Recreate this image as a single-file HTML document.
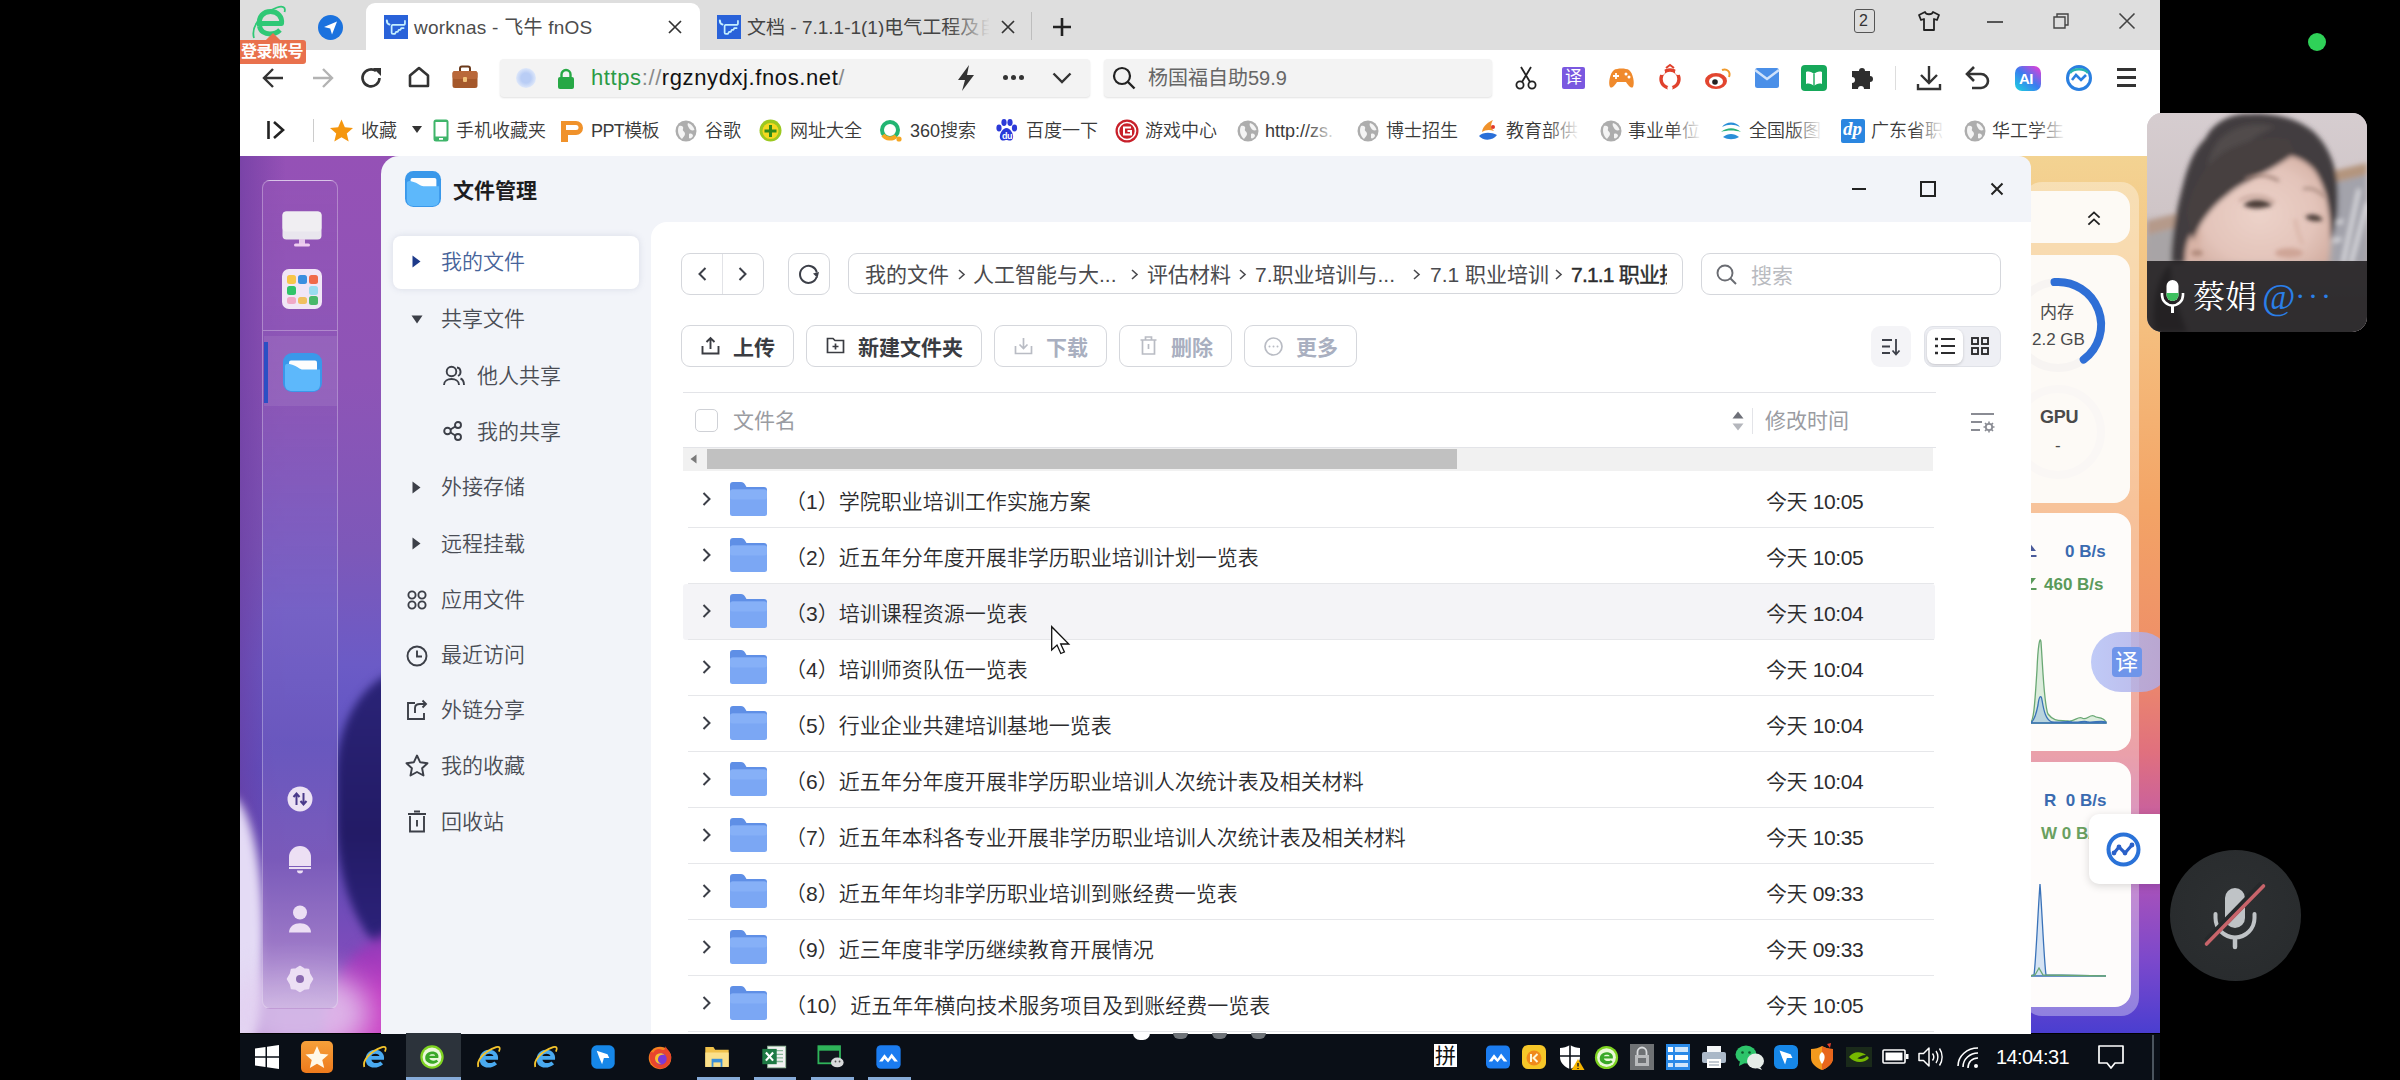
<!DOCTYPE html>
<html lang="zh-CN">
<head>
<meta charset="utf-8">
<title>worknas - 飞牛 fnOS</title>
<style>
*{box-sizing:border-box;margin:0;padding:0}
html,body{width:2400px;height:1080px;overflow:hidden;background:#000}
body{position:relative;font-family:"Liberation Sans","Noto Sans CJK SC",sans-serif;color:#333}
.a{position:absolute}
.t{position:absolute;white-space:nowrap;line-height:1}
svg{position:absolute;overflow:visible}
#tabbar{left:240px;top:0;width:1920px;height:50px;background:#dedede}
#addr{left:240px;top:50px;width:1920px;height:55px;background:#fff}
#bm{left:240px;top:105px;width:1920px;height:51px;background:#fff}
.bmt{font-size:18px;color:#3a3a3a;top:122px;font-weight:350}
#page{left:240px;top:156px;width:1920px;height:877px;overflow:hidden;background:#8a55b8}
#task{left:240px;top:1033.500px;width:1920px;height:47px;background:#0a0f17}
#win{left:381px;top:156px;width:1650px;height:880px;background:#f2f4f9;border-radius:18px 12px 0 0}
#main{left:651px;top:222px;width:1380px;height:815px;background:#fff;border-radius:16px 0 0 0}
.nav{font-size:21px;color:#4a4d55;font-weight:350}
.btn{border:1px solid #d5d7dc;border-radius:9px;background:#fff}
.bt{font-size:21px;font-weight:700;color:#3a3c42}
.row{left:683px;width:1250px;height:56px}
.rowl{left:688px;width:1246px;height:1px;background:#e6e7ea}
.fn{font-size:21px;color:#2c2c2e;left:785px;font-weight:350}
.dt{font-size:21px;color:#2c2c2e;left:1766px;letter-spacing:-0.4px;font-weight:350}
</style>
</head>
<body>
<!-- ======= BROWSER CHROME ======= -->
<div class="a" id="tabbar"></div>
<div class="a" id="addr"></div>
<div class="a" id="bm"></div>
<!-- browser logo -->
<svg style="left:250px;top:4px" width="38" height="36" viewBox="0 0 38 36">
  <path d="M9.500 22 C10.500 27.500 15 30 20 30 C24 30 27.500 28.500 30 26" fill="none" stroke="#2fc876" stroke-width="5"/>
  <path d="M9.500 22 C8 12 14 7.500 20.500 7.500 C28 7.500 32.500 13 31.500 19.500 H9.500" fill="none" stroke="#2fc876" stroke-width="5" stroke-linejoin="round"/>
  <path d="M4 34 C1 24 9 10 27 3.500 C33 1.500 36 3.500 34.500 8" fill="none" stroke="#2fc876" stroke-width="1.800"/>
</svg>
<div class="a" style="left:240px;top:40px;width:66px;height:24px;background:#e9714d;border-radius:0 3px 3px 0"></div>
<div class="a" style="left:268px;top:35px;width:10px;height:10px;background:#e9714d;transform:rotate(45deg)"></div>
<div class="t" style="left:241px;top:44px;font-size:16px;font-weight:700;color:#fff;letter-spacing:-0.5px">登录账号</div>
<!-- telegram-like -->
<div class="a" style="left:318px;top:15px;width:25px;height:25px;border-radius:50%;background:#1b72de"></div>
<svg style="left:318px;top:15px" width="25" height="25" viewBox="0 0 25 25"><path d="M6 12 L19 6.5 L14 19.5 L12.2 13.6 Z" fill="#fff"/></svg>
<!-- active tab -->
<div class="a" style="left:366px;top:3px;width:334px;height:47px;background:#fff;border-radius:9px 9px 0 0"></div>
<div class="a" style="left:384px;top:15px;width:24px;height:24px;background:#2962d9"></div>
<svg style="left:384px;top:15px" width="24" height="24" viewBox="0 0 23.600 23.600"><path d="M2.800 5.500 C2.800 7.600 3.800 9 5.400 9.400" fill="none" stroke="#c4efff" stroke-width="2" stroke-linecap="round"/><path d="M20.600 5.800 V8 C20.600 9.100 19.800 9.800 18.800 9.800 H8.600 C7.900 9.800 7.500 10.200 7.500 11 V17.400 C7.500 18.200 8 18.600 8.700 18.600 H10.800 L11.800 16.600 H13.500 L14.500 14.600 H16.100 L17.100 12.800 H19.300" fill="none" stroke="#c4efff" stroke-width="1.700" stroke-linecap="round" stroke-linejoin="round"/></svg>
<div class="t" style="left:414px;top:18px;font-size:19px;color:#4c4c4c;letter-spacing:0.250px">worknas - 飞牛 fnOS</div>
<svg style="left:668px;top:20px" width="14" height="14" viewBox="0 0 14 14"><path d="M1 1 L13 13 M13 1 L1 13" stroke="#333" stroke-width="1.7"/></svg>
<!-- tab 2 -->
<div class="a" style="left:717px;top:15px;width:24px;height:24px;background:#2962d9"></div>
<svg style="left:717px;top:15px" width="24" height="24" viewBox="0 0 23.600 23.600"><path d="M2.800 5.500 C2.800 7.600 3.800 9 5.400 9.400" fill="none" stroke="#c4efff" stroke-width="2" stroke-linecap="round"/><path d="M20.600 5.800 V8 C20.600 9.100 19.800 9.800 18.800 9.800 H8.600 C7.900 9.800 7.500 10.200 7.500 11 V17.400 C7.500 18.200 8 18.600 8.700 18.600 H10.800 L11.800 16.600 H13.500 L14.500 14.600 H16.100 L17.100 12.800 H19.300" fill="none" stroke="#c4efff" stroke-width="1.700" stroke-linecap="round" stroke-linejoin="round"/></svg>
<div class="t" style="left:747px;top:18px;width:242px;overflow:hidden;font-size:19px;color:#444;letter-spacing:0">文档 - 7.1.1-1(1)电气工程及自动化</div>
<div class="a" style="left:950px;top:10px;width:40px;height:36px;background:linear-gradient(90deg,rgba(222,222,222,0),#dedede)"></div>
<svg style="left:1001px;top:20px" width="14" height="14" viewBox="0 0 14 14"><path d="M1 1 L13 13 M13 1 L1 13" stroke="#333" stroke-width="1.7"/></svg>
<div class="a" style="left:1031px;top:12px;width:1px;height:28px;background:#bdbdbd"></div>
<svg style="left:1052px;top:17px" width="20" height="20" viewBox="0 0 20 20"><path d="M10 1 V19 M1 10 H19" stroke="#222" stroke-width="2.6"/></svg>
<!-- window controls -->
<div class="a" style="left:1854px;top:9px;width:21px;height:24px;border:1.5px solid #555;border-radius:3px"></div>
<div class="t" style="left:1859px;top:13px;font-size:16px;color:#333">2</div>
<svg style="left:1918px;top:11px" width="22" height="20" viewBox="0 0 22 20"><path d="M7 1 L1 4 L3 9 L6 8 L6 19 L16 19 L16 8 L19 9 L21 4 L15 1 C14 4 8 4 7 1 Z" fill="none" stroke="#222" stroke-width="1.8" stroke-linejoin="round"/></svg>
<div class="a" style="left:1987px;top:21px;width:16px;height:2px;background:#555"></div>
<svg style="left:2053px;top:13px" width="16" height="16" viewBox="0 0 16 16"><path d="M1 4 H12 V15 H1 Z M4 4 V1 H15 V12 H12" fill="none" stroke="#444" stroke-width="1.4"/></svg>
<svg style="left:2119px;top:13px" width="16" height="16" viewBox="0 0 16 16"><path d="M0.5 0.5 L15.5 15.5 M15.5 0.5 L0.5 15.5" stroke="#444" stroke-width="1.6"/></svg>

<!-- address row -->
<svg style="left:262px;top:67px" width="22" height="22" viewBox="0 0 22 22"><path d="M21 11 H2 M11 2 L2 11 L11 20" fill="none" stroke="#333" stroke-width="2.4"/></svg>
<svg style="left:312px;top:67px" width="22" height="22" viewBox="0 0 22 22"><path d="M1 11 H20 M11 2 L20 11 L11 20" fill="none" stroke="#b3b3b3" stroke-width="2.4"/></svg>
<svg style="left:360px;top:67px" width="22" height="22" viewBox="0 0 22 22"><path d="M19.5 11 A8.5 8.5 0 1 1 16 4" fill="none" stroke="#333" stroke-width="2.6"/><path d="M13 1 H21 V9 Z" fill="#333"/></svg>
<svg style="left:407px;top:66px" width="24" height="22" viewBox="0 0 24 22"><path d="M3 9.5 L12 2 L21 9.5 V20 H3 Z" fill="none" stroke="#333" stroke-width="2.6" stroke-linejoin="round"/></svg>
<!-- briefcase -->
<svg style="left:452px;top:65px" width="26" height="24" viewBox="0 0 26 24"><rect x="8" y="1.5" width="10" height="6" rx="2" fill="none" stroke="#6b3a1c" stroke-width="2"/><rect x="0.5" y="6" width="25" height="17" rx="2.5" fill="#a5582b"/><rect x="0.5" y="6" width="25" height="8" rx="2.5" fill="#b9683a"/><rect x="11" y="12" width="4" height="5" rx="1" fill="#f2c27a"/></svg>
<!-- url box -->
<div class="a" style="left:500px;top:59px;width:590px;height:38px;background:#f3f3f3;border-radius:4px;box-shadow:0 1px 2px rgba(0,0,0,.12)"></div>
<div class="a" style="left:516px;top:68px;width:20px;height:20px;border-radius:50%;background:radial-gradient(circle,#b9cdf5 35%,#e3ebfa 75%)"></div>
<svg style="left:557px;top:68px" width="18" height="22" viewBox="0 0 18 22"><path d="M4.5 10 V6.5 A4.5 4.5 0 0 1 13.500 6.5 V10" fill="none" stroke="#27a845" stroke-width="2.4"/><rect x="1" y="9" width="16" height="12" rx="2" fill="#27a845"/></svg>
<div class="t" style="left:591px;top:67px;font-size:22px;color:#111;letter-spacing:0.600px"><span style="color:#2a9b45">https</span><span style="color:#8a8a8a">://</span>rgznydxj.fnos.net<span style="color:#8a8a8a">/</span></div>
<svg style="left:956px;top:64px" width="20" height="28" viewBox="0 0 20 28"><path d="M13 1 L2 16 H9 L6 27 L18 11 H11 Z" fill="#333"/></svg>
<div class="a" style="left:1003px;top:75px;width:5px;height:5px;border-radius:50%;background:#333;box-shadow:8px 0 0 #333,16px 0 0 #333"></div>
<svg style="left:1052px;top:72px" width="20" height="12" viewBox="0 0 20 12"><path d="M1.500 1.500 L10 10 L18.500 1.500" fill="none" stroke="#333" stroke-width="2.4"/></svg>
<!-- search box -->
<div class="a" style="left:1104px;top:59px;width:388px;height:38px;background:#f3f3f3;border-radius:4px;box-shadow:0 1px 2px rgba(0,0,0,.12)"></div>
<svg style="left:1112px;top:66px" width="24" height="24" viewBox="0 0 24 24"><circle cx="10" cy="10" r="8" fill="none" stroke="#222" stroke-width="2.2"/><path d="M16 16 L22.500 22.500" stroke="#222" stroke-width="2.4"/></svg>
<div class="t" style="left:1148px;top:68px;font-size:20px;color:#666">杨国福自助59.9</div>
<!-- toolbar icons -->
<svg style="left:1515px;top:66px" width="22" height="24" viewBox="0 0 22 24"><path d="M6 1 L15 16 M16 1 L7 16" stroke="#222" stroke-width="1.8"/><circle cx="5" cy="19" r="3.6" fill="none" stroke="#222" stroke-width="1.8"/><circle cx="17" cy="19" r="3.6" fill="none" stroke="#222" stroke-width="1.8"/></svg>
<div class="a" style="left:1562px;top:67px;width:23px;height:22px;background:#7a58e0;border-radius:2px"></div>
<div class="t" style="left:1565px;top:69px;font-size:17px;color:#fff">译</div>
<svg style="left:1608px;top:67px" width="27" height="22" viewBox="0 0 27 22"><path d="M6 3 C9 1 18 1 21 3 C25 6 27 16 25 20 C23 22 20 18 18 15 H9 C7 18 4 22 2 20 C0 16 2 6 6 3 Z" fill="#f08a2c"/><path d="M8 6 V12 M5 9 H11" stroke="#fff" stroke-width="1.8"/><circle cx="18" cy="7" r="1.5" fill="#fff"/><circle cx="21" cy="10" r="1.5" fill="#fff"/></svg>
<svg style="left:1657px;top:65px" width="26" height="26" viewBox="0 0 26 26"><circle cx="13" cy="14" r="9" fill="none" stroke="#e0412c" stroke-width="3.4"/><circle cx="5" cy="7" r="3" fill="#fff"/><circle cx="21" cy="7" r="3" fill="#fff"/><circle cx="13" cy="23" r="2.6" fill="#fff"/><path d="M9 3 L13 0 L17 3" fill="none" stroke="#e0412c" stroke-width="2"/></svg>
<svg style="left:1704px;top:66px" width="28" height="24" viewBox="0 0 28 24"><ellipse cx="12" cy="15" rx="11" ry="8" fill="#e2452f"/><ellipse cx="12" cy="15.500" rx="7" ry="5" fill="#fff"/><circle cx="11" cy="16" r="2.8" fill="#222"/><path d="M18 4 C23 2 27 6 25 11" fill="none" stroke="#f09a2c" stroke-width="2"/></svg>
<svg style="left:1755px;top:68px" width="24" height="20" viewBox="0 0 24 20"><rect x="0" y="0" width="24" height="20" rx="2.500" fill="#4a8fe8"/><path d="M0 2 L12 11 L24 2" fill="none" stroke="#cfe2fb" stroke-width="2.4"/></svg>
<svg style="left:1801px;top:65px" width="26" height="26" viewBox="0 0 26 26"><rect x="0" y="0" width="26" height="26" rx="4" fill="#16a85a"/><path d="M5 7 C8 6 11 7 13 9 C15 7 18 6 21 7 V19 C18 18 15 19 13 21 C11 19 8 18 5 19 Z" fill="#fff"/><path d="M13 9 V21" stroke="#16a85a" stroke-width="1.4"/></svg>
<svg style="left:1850px;top:66px" width="26" height="25" viewBox="0 0 26 25"><path d="M9 5 A3 3 0 1 1 15 5 H20 V10 A3 3 0 1 1 20 16 V23 H14 A3 3 0 1 0 8 23 H2 V17 A3 3 0 1 0 2 11 V5 Z" fill="#2e2e2e"/></svg>
<div class="a" style="left:1895px;top:66px;width:1px;height:24px;background:#ddd"></div>
<svg style="left:1916px;top:65px" width="26" height="26" viewBox="0 0 26 26"><path d="M13 1 V17 M5 10 L13 18 L21 10 M2 19 V24 H24 V19" fill="none" stroke="#333" stroke-width="2.4"/></svg>
<svg style="left:1965px;top:66px" width="26" height="24" viewBox="0 0 26 24"><path d="M2 8 H16 A7 7 0 0 1 16 22 H7" fill="none" stroke="#333" stroke-width="2.6"/><path d="M9 1 L2 8 L9 15" fill="none" stroke="#333" stroke-width="2.6"/></svg>
<div class="a" style="left:2015px;top:66px;width:26px;height:25px;border-radius:7px;background:linear-gradient(40deg,#1fcbe0 5%,#3a7cf0 50%,#e23fd8 95%)"></div>
<div class="t" style="left:2019px;top:71px;font-size:15px;font-weight:700;color:#fff;letter-spacing:-0.5px">AI</div>
<div class="a" style="left:2066px;top:65px;width:26px;height:26px;border-radius:50%;border:3px solid #2a7fe0;background:#fff"></div>
<svg style="left:2066px;top:65px" width="26" height="26" viewBox="0 0 26 26"><path d="M6 15 L10 10 L15 15 L20 10" fill="none" stroke="#2a7fe0" stroke-width="2.6"/><path d="M4 8 C8 3 18 3 22 8" fill="none" stroke="#29b5b0" stroke-width="2.4"/></svg>
<div class="a" style="left:2117px;top:68px;width:19px;height:3px;background:#333;box-shadow:0 8px 0 #333,0 16px 0 #333"></div>

<!-- bookmarks bar -->
<svg style="left:267px;top:120px" width="19" height="20" viewBox="0 0 19 20"><path d="M1.500 1 V19 M7 2 L16 10 L7 18" fill="none" stroke="#222" stroke-width="2.6"/></svg>
<div class="a" style="left:313px;top:119px;width:1px;height:23px;background:#ccc"></div>
<svg style="left:329px;top:119px" width="25" height="23" viewBox="0 0 25 24"><path d="M12.500 0.500 L16 8.500 L24.500 9.300 L18 15 L20 23.500 L12.500 19 L5 23.500 L7 15 L0.500 9.300 L9 8.500 Z" fill="#f5970f"/></svg>
<div class="t bmt" style="left:361px">收藏</div>
<svg style="left:412px;top:126px" width="10" height="7" viewBox="0 0 10 7"><path d="M0 0 H10 L5 7 Z" fill="#333"/></svg>
<svg style="left:433px;top:119px" width="16" height="23" viewBox="0 0 16 23"><rect x="0.500" y="0.500" width="15" height="22" rx="2.500" fill="#3fb56a"/><rect x="2.500" y="3" width="11" height="14.500" fill="#fff"/><rect x="6" y="19" width="4" height="1.800" fill="#fff"/></svg>
<div class="t bmt" style="left:456px">手机收藏夹</div>
<svg style="left:560px;top:119px" width="24" height="24" viewBox="0 0 24 24"><path d="M1 2 H16 A7 7 0 0 1 16 16 H8 V23 H1 Z" fill="#f0922b"/><path d="M6 6 H16 A2.500 2.500 0 0 1 16 11 H6 Z" fill="#fff"/></svg>
<div class="t bmt" style="left:591px;letter-spacing:-0.600px">PPT模板</div>
<div class="t bmt" style="left:705px">谷歌</div>
<svg style="left:759px;top:119px" width="23" height="23" viewBox="0 0 23 23"><circle cx="11.500" cy="11.500" r="11" fill="#9cc820"/><circle cx="11.500" cy="12" r="8" fill="#f5d820"/><path d="M11.500 6 V18 M5.500 12 H17.500" stroke="#2f8a1a" stroke-width="3"/></svg>
<div class="t bmt" style="left:790px">网址大全</div>
<svg style="left:879px;top:119px" width="24" height="24" viewBox="0 0 24 24"><circle cx="11" cy="11" r="8" fill="none" stroke="#22b573" stroke-width="4"/><path d="M4 16 A8.500 8.500 0 0 0 17 17" fill="none" stroke="#f5a623" stroke-width="4"/><circle cx="20" cy="20" r="2.600" fill="#f5a623"/></svg>
<div class="t bmt" style="left:910px">360搜索</div>
<svg style="left:995px;top:118px" width="23" height="24" viewBox="0 0 23 24"><ellipse cx="4" cy="10" rx="2.600" ry="3.400" fill="#2b39d8"/><ellipse cx="9" cy="4.500" rx="2.600" ry="3.400" fill="#2b39d8"/><ellipse cx="15" cy="4.500" rx="2.600" ry="3.400" fill="#2b39d8"/><ellipse cx="19.500" cy="10" rx="2.600" ry="3.400" fill="#2b39d8"/><path d="M11.500 10 C15 10 19 16 18 20 C17 24 13 22 11.500 22 C10 22 6 24 5 20 C4 16 8 10 11.500 10 Z" fill="#2b39d8"/></svg>
<div class="t" style="left:1002px;top:132px;font-size:9px;font-weight:700;color:#fff;letter-spacing:-0.500px">du</div>
<div class="t bmt" style="left:1026px">百度一下</div>
<svg style="left:1115px;top:119px" width="24" height="24" viewBox="0 0 24 24"><circle cx="12" cy="12" r="11.500" fill="#c8202a"/><circle cx="12" cy="12" r="8.500" fill="none" stroke="#fff" stroke-width="1.600"/><path d="M16 8.500 H9 V15.500 H16 V12 H12.500" fill="none" stroke="#fff" stroke-width="2"/></svg>
<div class="t bmt" style="left:1145px">游戏中心</div>
<div class="t bmt" style="left:1265px;width:71px;overflow:hidden">http://zs.</div>
<div class="a" style="left:1306px;top:112px;width:32px;height:36px;background:linear-gradient(90deg,rgba(255,255,255,0),#fff)"></div>
<div class="t bmt" style="left:1386px">博士招生</div>
<svg style="left:1477px;top:119px" width="22" height="23" viewBox="0 0 22 23"><path d="M2 17 C6 13 14 13 20 16 C16 22 6 22 2 17 Z" fill="#2a6fd8"/><path d="M5 13 C6 6 12 3 16 1 C13 6 14 9 17 12 C12 10 8 11 5 13 Z" fill="#f0922b"/><circle cx="16" cy="8" r="2" fill="#e23a2a"/></svg>
<div class="t bmt" style="left:1506px">教育部供</div>
<div class="a" style="left:1548px;top:112px;width:32px;height:36px;background:linear-gradient(90deg,rgba(255,255,255,0),#fff)"></div>
<div class="t bmt" style="left:1628px">事业单位</div>
<div class="a" style="left:1670px;top:112px;width:32px;height:36px;background:linear-gradient(90deg,rgba(255,255,255,0),#fff)"></div>
<svg style="left:1720px;top:119px" width="22" height="23" viewBox="0 0 22 23"><path d="M2 8 C6 2 16 2 20 8 C14 5 8 5 2 8 Z" fill="#2a8fd8"/><path d="M1 13 C7 8 15 8 21 13 C15 11 7 11 1 13 Z" fill="#2ab07a"/><path d="M3 18 C8 14 14 14 19 18 C14 21 8 21 3 18 Z" fill="#2a8fd8"/></svg>
<div class="t bmt" style="left:1749px">全国版图</div>
<div class="a" style="left:1791px;top:112px;width:32px;height:36px;background:linear-gradient(90deg,rgba(255,255,255,0),#fff)"></div>
<div class="a" style="left:1841px;top:119px;width:24px;height:24px;background:#2a86e0;border-radius:2px"></div>
<div class="t" style="left:1843px;top:119px;font-size:19px;font-style:italic;font-weight:700;color:#fff;font-family:'Liberation Serif',serif">dp</div>
<div class="t bmt" style="left:1871px">广东省职</div>
<div class="a" style="left:1913px;top:112px;width:32px;height:36px;background:linear-gradient(90deg,rgba(255,255,255,0),#fff)"></div>
<div class="t bmt" style="left:1992px">华工学生</div>
<div class="a" style="left:2034px;top:112px;width:32px;height:36px;background:linear-gradient(90deg,rgba(255,255,255,0),#fff)"></div>
<svg style="left:675px;top:120px" width="22" height="22" viewBox="0 0 22 22"><circle cx="11" cy="11" r="10.500" fill="#adadad"/><path d="M4 6 C7 5 9 7 8 9 C7 11 10 11 10 14 C10 16 8 17 7 19 C3 16 2 10 4 6 Z M13 3 C16 4 19 7 19.500 10 C17 11 15 10 14 8 C13 6 12 5 13 3 Z M14 14 C16 13 18 14 18 16 C17 18 15 19 14 18 Z" fill="#f4f4f4"/></svg>
<svg style="left:1237px;top:120px" width="22" height="22" viewBox="0 0 22 22"><circle cx="11" cy="11" r="10.500" fill="#adadad"/><path d="M4 6 C7 5 9 7 8 9 C7 11 10 11 10 14 C10 16 8 17 7 19 C3 16 2 10 4 6 Z M13 3 C16 4 19 7 19.500 10 C17 11 15 10 14 8 C13 6 12 5 13 3 Z M14 14 C16 13 18 14 18 16 C17 18 15 19 14 18 Z" fill="#f4f4f4"/></svg>
<svg style="left:1357px;top:120px" width="22" height="22" viewBox="0 0 22 22"><circle cx="11" cy="11" r="10.500" fill="#adadad"/><path d="M4 6 C7 5 9 7 8 9 C7 11 10 11 10 14 C10 16 8 17 7 19 C3 16 2 10 4 6 Z M13 3 C16 4 19 7 19.500 10 C17 11 15 10 14 8 C13 6 12 5 13 3 Z M14 14 C16 13 18 14 18 16 C17 18 15 19 14 18 Z" fill="#f4f4f4"/></svg>
<svg style="left:1600px;top:120px" width="22" height="22" viewBox="0 0 22 22"><circle cx="11" cy="11" r="10.500" fill="#adadad"/><path d="M4 6 C7 5 9 7 8 9 C7 11 10 11 10 14 C10 16 8 17 7 19 C3 16 2 10 4 6 Z M13 3 C16 4 19 7 19.500 10 C17 11 15 10 14 8 C13 6 12 5 13 3 Z M14 14 C16 13 18 14 18 16 C17 18 15 19 14 18 Z" fill="#f4f4f4"/></svg>
<svg style="left:1964px;top:120px" width="22" height="22" viewBox="0 0 22 22"><circle cx="11" cy="11" r="10.500" fill="#adadad"/><path d="M4 6 C7 5 9 7 8 9 C7 11 10 11 10 14 C10 16 8 17 7 19 C3 16 2 10 4 6 Z M13 3 C16 4 19 7 19.500 10 C17 11 15 10 14 8 C13 6 12 5 13 3 Z M14 14 C16 13 18 14 18 16 C17 18 15 19 14 18 Z" fill="#f4f4f4"/></svg>
<!-- ======= PAGE / WALLPAPER ======= -->
<div class="a" id="page"></div>
<!-- left wallpaper strip -->
<div class="a" style="left:240px;top:156px;width:160px;height:877px;overflow:hidden;background:linear-gradient(180deg,#9551b6 0%,#8e54b6 25%,#7d58b9 45%,#6b5bc6 58%,#5f52c2 70%,#6a4cb8 84%,#9a4cc0 100%)">
  <div class="a" style="left:0;top:0;width:46px;height:877px;background:linear-gradient(90deg,rgba(104,58,158,.600),rgba(104,58,158,0))"></div>
  <div class="a" style="left:96px;top:512px;width:170px;height:300px;border-radius:46% 0 0 50%/36% 0 0 50%;background:linear-gradient(180deg,#2b2478,#231b66 55%,#2f2480);filter:blur(4px)"></div>
  <div class="a" style="left:84px;top:770px;width:140px;height:150px;border-radius:70% 0 0 0;background:linear-gradient(170deg,#7a38b4,#c43ec4 45%,#d64ac8);filter:blur(6px)"></div>
  <div class="a" style="left:-46px;top:640px;width:70px;height:290px;border-radius:50%;background:#e4dbf5;filter:blur(5px)"></div>
  <div class="a" style="left:-20px;top:812px;width:150px;height:90px;border-radius:50%;background:rgba(226,208,240,.800);filter:blur(14px)"></div>
</div>
<!-- right wallpaper strip -->
<div class="a" style="left:1990px;top:156px;width:170px;height:877px;background:linear-gradient(180deg,#f3d392 0%,#f5be7e 20%,#f3a466 40%,#ee8d68 58%,#e0707e 68%,#b855b4 80%,#7a48cc 92%,#4a3ed0 100%)"></div>

<!-- dock -->
<div class="a" style="left:262px;top:180px;width:76px;height:829px;border:1px solid rgba(255,255,255,.300);border-radius:8px;background:linear-gradient(180deg,rgba(148,84,182,.700) 0%,rgba(138,88,184,.800) 28%,rgba(118,98,198,.900) 52%,rgba(106,88,190,.900) 68%,rgba(124,92,186,.900) 82%,rgba(158,124,200,.900) 92%,rgba(206,182,226,.900) 100%)"></div>
<div class="a" style="left:263px;top:330px;width:74px;height:1px;background:rgba(255,255,255,.3)"></div>
<div class="a" style="left:264px;top:336px;width:73px;height:70px;background:rgba(255,255,255,.080)"></div>
<div class="a" style="left:264px;top:342px;width:4px;height:61px;background:#2b4fc4"></div>
<!-- monitor icon -->
<svg style="left:282px;top:211px" width="40" height="37" viewBox="0 0 40 37"><rect x="0.500" y="0.500" width="39" height="28" rx="4" fill="#e9e6ee"/><rect x="0.500" y="0.500" width="39" height="20" rx="4" fill="#f0eef2"/><rect x="17" y="28" width="6" height="5" fill="#e6c8ea"/><rect x="12" y="32.500" width="16" height="3" rx="1.500" fill="#efcdf0"/></svg>
<!-- apps icon -->
<svg style="left:282px;top:269px" width="40" height="40" viewBox="0 0 40 40"><rect width="40" height="40" rx="7" fill="#f1e6f6"/><rect x="5" y="6" width="9" height="9" rx="2.500" fill="#f7c64a"/><rect x="16" y="6" width="9" height="9" rx="2.500" fill="#3a8fe0"/><rect x="27" y="6" width="9" height="9" rx="2.500" fill="#f06a4a"/><rect x="5" y="17" width="9" height="9" rx="2.500" fill="#2fc46a"/><rect x="27" y="17" width="9" height="9" rx="2.500" fill="#9adcf0"/><rect x="5" y="28" width="9" height="7" rx="2.500" fill="#f0a8c8"/><rect x="16" y="28" width="9" height="7" rx="2.500" fill="#f0c060"/><rect x="27" y="27" width="9" height="9" rx="2.500" fill="#4ab86a"/></svg>
<!-- files icon -->
<svg style="left:283px;top:353px" width="39" height="39" viewBox="0 0 39 39"><rect width="39" height="39" rx="9" fill="#3a98ea"/><rect x="6" y="7.500" width="28" height="13" rx="2" fill="#fdfdfd"/><path d="M2 13.500 C2 11 4 10.500 6.500 11 C10.500 12 13.500 13 16.500 15.500 C18 16.500 19.500 16.500 21.500 16.500 H37 V31 C37 36 34 38 30 38 H9 C5 38 2 36 2 31 Z" fill="#5db8fb"/></svg>
<!-- bottom dock icons -->
<svg style="left:287px;top:786px" width="26" height="26" viewBox="0 0 26 26"><circle cx="13" cy="13" r="12.500" fill="#ece2f4"/><path d="M9.500 19 V8 M6.500 11 L9.500 7.500 L12.500 11 M16.500 7 V18 M13.500 15 L16.500 18.500 L19.500 15" fill="none" stroke="#4a3a8a" stroke-width="2"/></svg>
<svg style="left:288px;top:845px" width="24" height="29" viewBox="0 0 24 29"><path d="M1 21 V12 A11 11 0 0 1 23 12 V21 Z" fill="#ecdff4"/><rect x="1" y="22" width="22" height="2" fill="#ecdff4"/><path d="M9 25.500 H15 A3 3 0 0 1 9 25.500 Z" fill="#ecdff4"/></svg>
<svg style="left:289px;top:905px" width="22" height="28" viewBox="0 0 22 28"><circle cx="11" cy="7.500" r="7" fill="#ecdff4"/><path d="M0 27.500 C0 15 22 15 22 27.500 Z" fill="#ecdff4"/></svg>
<svg style="left:287px;top:966px" width="26" height="26" viewBox="0 0 26 26"><path d="M13 0.500 L17 3 L21.500 3.500 L22.500 8 L25.500 13 L22.500 18 L21.500 22.500 L17 23 L13 25.500 L9 23 L4.500 22.500 L3.500 18 L0.500 13 L3.500 8 L4.500 3.500 L9 3 Z" fill="#ecdff4" stroke="#ecdff4" stroke-width="1.500" stroke-linejoin="round"/><circle cx="13" cy="13" r="4" fill="#8a6ab0"/></svg>
<!-- ======= RIGHT WIDGET PANEL ======= -->
<div class="a" style="left:2024px;top:182px;width:115px;height:834px;border-radius:18px;background:rgba(255,255,255,.340)"></div>
<div class="a" style="left:2010px;top:191px;width:120px;height:52px;border-radius:16px;background:#fdfaf5"></div>
<svg style="left:2087px;top:211px" width="14" height="15" viewBox="0 0 15 16"><path d="M1.500 7 L7.500 1.500 L13.500 7 M1.500 14.500 L7.500 9 L13.500 14.500" fill="none" stroke="#222" stroke-width="2"/></svg>
<div class="a" style="left:2010px;top:255px;width:120px;height:248px;border-radius:16px;background:#fdfaf6"></div>
<!-- mem ring -->
<svg style="left:2008px;top:275px" width="100" height="100" viewBox="0 0 100 100"><circle cx="50" cy="50" r="43" fill="none" stroke="#f7f4f2" stroke-width="8"/><path d="M46.500 7.100 A43 43 0 0 1 75.700 84.500" fill="none" stroke="#2f6fd6" stroke-width="8" stroke-linecap="round"/></svg>
<div class="t" style="left:2040px;top:304px;font-size:17px;color:#4a4a4a">内存</div>
<div class="t" style="left:2032px;top:331px;font-size:17px;color:#4a4a4a">2.2 GB</div>
<!-- gpu ring -->
<svg style="left:2008px;top:382px" width="100" height="100" viewBox="0 0 100 100"><circle cx="50" cy="50" r="43" fill="none" stroke="#faf7f5" stroke-width="8"/></svg>
<div class="t" style="left:2040px;top:408px;font-size:18px;font-weight:700;color:#4a4a4a;letter-spacing:-0.3px">GPU</div>
<div class="t" style="left:2055px;top:437px;font-size:17px;color:#4a4a4a">-</div>
<!-- network card -->
<div class="a" style="left:2010px;top:513px;width:121px;height:238px;border-radius:16px;background:#fefcfa"></div>
<svg style="left:2024px;top:543px" width="13" height="15" viewBox="0 0 13 15"><path d="M6.500 1 L12 8 H1 Z" fill="#4a5a9a"/><path d="M0.500 13 H12.500" stroke="#4a5a9a" stroke-width="2"/></svg>
<div class="t" style="left:2065px;top:543px;font-size:17px;font-weight:700;color:#3a6bb0">0 B/s</div>
<svg style="left:2024px;top:576px" width="13" height="15" viewBox="0 0 13 15"><path d="M6.500 9 L12 2 H1 Z" fill="#5a9a5a"/><path d="M0.500 13 H12.500" stroke="#5a9a5a" stroke-width="2"/></svg>
<div class="t" style="left:2044px;top:576px;font-size:17px;font-weight:700;color:#5a9a5a">460 B/s</div>
<svg style="left:2030px;top:630px" width="80" height="100" viewBox="0 0 80 100"><path d="M0 93 C4 92 5 70 7 40 C8 15 10 5 11 12 C13 40 14 75 18 84 C24 92 30 90 38 91 C44 92 48 86 52 88 C56 91 60 84 64 86 C68 89 72 86 76 92 V93 Z" fill="rgba(140,200,150,.30)" stroke="#6aa874" stroke-width="1.300"/><path d="M0 93 C4 92 6 85 8 75 C9 66 11 64 12 70 C14 82 16 90 22 92 C30 93 36 91 42 92 C50 93 54 90 58 92 C64 93 70 90 76 92 V93 Z" fill="rgba(120,170,230,.35)" stroke="#3a72b8" stroke-width="1.300"/></svg>
<!-- disk card -->
<div class="a" style="left:2010px;top:762px;width:121px;height:245px;border-radius:16px;background:#fefcfb"></div>
<div class="t" style="left:2044px;top:792px;font-size:17px;font-weight:700;color:#3a6bb0">R&nbsp; 0 B/s</div>
<div class="t" style="left:2041px;top:825px;font-size:17px;font-weight:700;color:#6aa060">W 0 B/s</div>
<svg style="left:2030px;top:880px" width="80" height="100" viewBox="0 0 80 100"><path d="M0 96 L4 95 C6 80 8 30 10 4 C12 30 14 80 16 95 L76 96 Z" fill="rgba(120,170,230,.30)" stroke="#3a72b8" stroke-width="1.300"/><path d="M0 96 L5 95 L9 88 L13 95 L76 96" fill="none" stroke="#6aa874" stroke-width="1.300"/></svg>
<!-- translate pill -->
<div class="a" style="left:2091px;top:632px;width:80px;height:60px;border-radius:30px;background:linear-gradient(90deg,rgba(176,190,246,.800),rgba(176,168,226,.850))"></div>
<div class="a" style="left:2112px;top:647px;width:30px;height:30px;border-radius:4px;background:#6f95ea"></div>
<div class="t" style="left:2115px;top:651px;font-size:23px;color:#fff">译</div>
<!-- logo float -->
<div class="a" style="left:2089px;top:814px;width:80px;height:70px;border-radius:10px;background:#fff;box-shadow:0 2px 8px rgba(0,0,0,.15)"></div>
<svg style="left:2106px;top:832px" width="35" height="35" viewBox="0 0 35 35"><circle cx="17.500" cy="17.500" r="15" fill="#fff" stroke="#2a72d8" stroke-width="4"/><path d="M8 21 L13 15 L19 21 L26 13" fill="none" stroke="#2a60c8" stroke-width="3.200" stroke-linecap="round"/><circle cx="13" cy="15" r="2.400" fill="#2a60c8"/><circle cx="19" cy="21" r="2.400" fill="#2a60c8"/><circle cx="26" cy="13" r="2.400" fill="#2a60c8"/><circle cx="8" cy="21" r="2.400" fill="#2a60c8"/></svg>
<!-- ======= FILE MANAGER WINDOW ======= -->
<div class="a" id="win"></div>
<div class="a" id="main"></div>
<!-- title -->
<svg style="left:405px;top:171px" width="36" height="36" viewBox="0 0 39 39"><rect width="39" height="39" rx="9" fill="#3a98ea"/><rect x="6" y="7.500" width="28" height="13" rx="2" fill="#fdfdfd"/><path d="M2 13.500 C2 11 4 10.500 6.500 11 C10.500 12 13.500 13 16.500 15.500 C18 16.500 19.500 16.500 21.500 16.500 H37 V31 C37 36 34 38 30 38 H9 C5 38 2 36 2 31 Z" fill="#5db8fb"/></svg>
<div class="t" style="left:453px;top:180px;font-size:21px;font-weight:700;color:#1d1d1f">文件管理</div>
<div class="a" style="left:1852px;top:188px;width:14px;height:2px;background:#222"></div>
<div class="a" style="left:1920px;top:181px;width:16px;height:16px;border:2px solid #222"></div>
<svg style="left:1991px;top:183px" width="12" height="12" viewBox="0 0 12 12"><path d="M0.500 0.500 L11.500 11.500 M11.500 0.500 L0.500 11.500" stroke="#222" stroke-width="2"/></svg>

<!-- nav -->
<div class="a" style="left:393px;top:236px;width:246px;height:53px;background:#fff;border-radius:8px;box-shadow:0 0 7px rgba(120,130,160,.200)"></div>
<svg style="left:412px;top:255px" width="9" height="13" viewBox="0 0 9 13"><path d="M0.500 0.500 L8.500 6.500 L0.500 12.500 Z" fill="#1d3a8a"/></svg>
<div class="t nav" style="left:441px;top:251px;color:#46639a">我的文件</div>
<svg style="left:411px;top:315px" width="12" height="9" viewBox="0 0 12 9"><path d="M0.500 0.500 H11.500 L6 8.500 Z" fill="#3c3f48"/></svg>
<div class="t nav" style="left:441px;top:308px">共享文件</div>
<svg style="left:443px;top:365px" width="22" height="22" viewBox="0 0 22 22"><circle cx="8.500" cy="6.500" r="4.800" fill="none" stroke="#3c3f48" stroke-width="1.900"/><path d="M1 20 C1 12 16 12 16 20" fill="none" stroke="#3c3f48" stroke-width="1.900"/><path d="M14 2.500 C18 3 19 9 15 11 M17.500 13.500 C20 14.500 21 17 21 20" fill="none" stroke="#3c3f48" stroke-width="1.900"/></svg>
<div class="t nav" style="left:477px;top:365px">他人共享</div>
<svg style="left:443px;top:421px" width="20" height="20" viewBox="0 0 20 20"><circle cx="4.500" cy="10" r="3.300" fill="none" stroke="#3c3f48" stroke-width="1.900"/><circle cx="15" cy="4" r="3" fill="none" stroke="#3c3f48" stroke-width="1.900"/><circle cx="15" cy="16" r="3" fill="none" stroke="#3c3f48" stroke-width="1.900"/><path d="M7.500 8.500 L12.300 5.500 M7.500 11.500 L12.300 14.500" stroke="#3c3f48" stroke-width="1.900"/></svg>
<div class="t nav" style="left:477px;top:421px">我的共享</div>
<svg style="left:412px;top:481px" width="9" height="13" viewBox="0 0 9 13"><path d="M0.500 0.500 L8.500 6.500 L0.500 12.500 Z" fill="#3c3f48"/></svg>
<div class="t nav" style="left:441px;top:476px">外接存储</div>
<svg style="left:412px;top:537px" width="9" height="13" viewBox="0 0 9 13"><path d="M0.500 0.500 L8.500 6.500 L0.500 12.500 Z" fill="#3c3f48"/></svg>
<div class="t nav" style="left:441px;top:533px">远程挂载</div>
<svg style="left:407px;top:590px" width="20" height="20" viewBox="0 0 20 20"><circle cx="5" cy="5" r="3.600" fill="none" stroke="#3c3f48" stroke-width="1.900"/><circle cx="15" cy="5" r="3.600" fill="none" stroke="#3c3f48" stroke-width="1.900"/><circle cx="5" cy="15" r="3.600" fill="none" stroke="#3c3f48" stroke-width="1.900"/><circle cx="15" cy="15" r="3.600" fill="none" stroke="#3c3f48" stroke-width="1.900"/></svg>
<div class="t nav" style="left:441px;top:589px">应用文件</div>
<svg style="left:406px;top:645px" width="22" height="22" viewBox="0 0 22 22"><circle cx="11" cy="11" r="9.500" fill="none" stroke="#3c3f48" stroke-width="1.900"/><path d="M11 5.500 V11.500 H16" fill="none" stroke="#3c3f48" stroke-width="1.900"/></svg>
<div class="t nav" style="left:441px;top:644px">最近访问</div>
<svg style="left:406px;top:699px" width="22" height="22" viewBox="0 0 22 22"><path d="M9 4 H2 V20 H18 V14" fill="none" stroke="#3c3f48" stroke-width="1.900"/><path d="M9 14 V9 C9 6 11 5 14 5 H20 M16.500 1.500 L20 5 L16.500 8.500" fill="none" stroke="#3c3f48" stroke-width="1.900"/></svg>
<div class="t nav" style="left:441px;top:699px">外链分享</div>
<svg style="left:405px;top:754px" width="24" height="23" viewBox="0 0 24 23"><path d="M12 1.500 L15.200 8.300 L22.500 9.200 L17.100 14.300 L18.500 21.500 L12 18 L5.500 21.500 L6.900 14.300 L1.500 9.200 L8.800 8.300 Z" fill="none" stroke="#3c3f48" stroke-width="1.900" stroke-linejoin="round"/></svg>
<div class="t nav" style="left:441px;top:755px">我的收藏</div>
<svg style="left:407px;top:810px" width="20" height="23" viewBox="0 0 20 23"><path d="M1 4 H19 M7 1.500 H13 M3 6 V21.500 H17 V6 M10 10 V16.500" fill="none" stroke="#3c3f48" stroke-width="1.900"/></svg>
<div class="t nav" style="left:441px;top:811px">回收站</div>

<!-- path bar -->
<div class="a btn" style="left:681px;top:253px;width:83px;height:42px"></div>
<div class="a" style="left:722px;top:254px;width:1px;height:40px;background:#e2e3e7"></div>
<svg style="left:698px;top:267px" width="9" height="14" viewBox="0 0 9 14"><path d="M7.500 1 L1.500 7 L7.500 13" fill="none" stroke="#3c3f48" stroke-width="2"/></svg>
<svg style="left:738px;top:267px" width="9" height="14" viewBox="0 0 9 14"><path d="M1.500 1 L7.500 7 L1.500 13" fill="none" stroke="#3c3f48" stroke-width="2"/></svg>
<div class="a btn" style="left:788px;top:253px;width:42px;height:42px"></div>
<svg style="left:798px;top:264px" width="21" height="21" viewBox="0 0 21 21"><path d="M18.600 13 A8.500 8.500 0 1 1 18.800 8.500" fill="none" stroke="#3c3f48" stroke-width="2"/><path d="M15 9.500 L21 8 L19.500 14 Z" fill="#3c3f48"/></svg>
<div class="a btn" style="left:848px;top:253px;width:835px;height:41px"></div>
<div class="t" style="left:865px;top:264px;font-size:21px;color:#4a4a4e">我的文件</div>
<div class="t" style="left:973px;top:264px;font-size:21px;color:#4a4a4e">人工智能与大...</div>
<div class="t" style="left:1147px;top:264px;font-size:21px;color:#4a4a4e">评估材料</div>
<div class="t" style="left:1255px;top:264px;font-size:21px;color:#4a4a4e">7.职业培训与...</div>
<div class="t" style="left:1430px;top:264px;font-size:21px;color:#4a4a4e">7.1 职业培训</div>
<svg style="left:958px;top:269px" width="7" height="11" viewBox="0 0 7 11"><path d="M1 1 L6 5.500 L1 10" fill="none" stroke="#4a4a4e" stroke-width="1.600"/></svg>
<svg style="left:1131px;top:269px" width="7" height="11" viewBox="0 0 7 11"><path d="M1 1 L6 5.500 L1 10" fill="none" stroke="#4a4a4e" stroke-width="1.600"/></svg>
<svg style="left:1239px;top:269px" width="7" height="11" viewBox="0 0 7 11"><path d="M1 1 L6 5.500 L1 10" fill="none" stroke="#4a4a4e" stroke-width="1.600"/></svg>
<svg style="left:1413px;top:269px" width="7" height="11" viewBox="0 0 7 11"><path d="M1 1 L6 5.500 L1 10" fill="none" stroke="#4a4a4e" stroke-width="1.600"/></svg>
<svg style="left:1555px;top:269px" width="7" height="11" viewBox="0 0 7 11"><path d="M1 1 L6 5.500 L1 10" fill="none" stroke="#4a4a4e" stroke-width="1.600"/></svg>
<div class="t" style="left:1571px;top:264px;width:96px;overflow:hidden;font-size:21px;color:#2c2c2e;letter-spacing:-0.800px;-webkit-text-stroke:0.400px #2c2c2e">7.1.1 职业技能培训</div>
<div class="a btn" style="left:1701px;top:253px;width:300px;height:42px"></div>
<svg style="left:1716px;top:264px" width="21" height="21" viewBox="0 0 21 21"><circle cx="9" cy="9" r="7.500" fill="none" stroke="#6a6c72" stroke-width="1.900"/><path d="M14.500 14.500 L20 20" stroke="#6a6c72" stroke-width="1.900"/></svg>
<div class="t" style="left:1751px;top:265px;font-size:21px;color:#b9bbc0">搜索</div>

<!-- action buttons -->
<div class="a btn" style="left:681px;top:325px;width:113px;height:42px"></div>
<svg style="left:701px;top:337px" width="19" height="18" viewBox="0 0 19 18"><path d="M9.500 12 V1.500 M5.500 5 L9.500 1 L13.500 5 M1.500 9 V16.500 H17.500 V9" fill="none" stroke="#3a3c42" stroke-width="1.900"/></svg>
<div class="t bt" style="left:733px;top:337px">上传</div>
<div class="a btn" style="left:806px;top:325px;width:176px;height:42px"></div>
<svg style="left:826px;top:337px" width="19" height="17" viewBox="0 0 19 17"><path d="M1.500 1.500 H7 L9 3.500 H17.500 V15.500 H1.500 Z M9.500 6.500 V12.500 M6.500 9.500 H12.500" fill="none" stroke="#3a3c42" stroke-width="1.700"/></svg>
<div class="t bt" style="left:858px;top:337px">新建文件夹</div>
<div class="a btn" style="left:994px;top:325px;width:113px;height:42px"></div>
<svg style="left:1014px;top:337px" width="19" height="18" viewBox="0 0 19 18"><path d="M9.500 1 V11 M5.500 7.500 L9.500 11.500 L13.500 7.500 M1.500 9 V16.500 H17.500 V9" fill="none" stroke="#b9bcc4" stroke-width="1.700"/></svg>
<div class="t bt" style="left:1046px;top:337px;color:#a9afc0">下载</div>
<div class="a btn" style="left:1119px;top:325px;width:113px;height:42px"></div>
<svg style="left:1140px;top:336px" width="17" height="19" viewBox="0 0 17 19"><path d="M0.500 4 H16.500 M5.500 4 V1 H11.500 V4 M2.500 4 V18 H14.500 V4 M8.500 8 V13" fill="none" stroke="#b9bcc4" stroke-width="1.700"/></svg>
<div class="t bt" style="left:1171px;top:337px;color:#a9afc0">删除</div>
<div class="a btn" style="left:1244px;top:325px;width:113px;height:42px"></div>
<svg style="left:1264px;top:337px" width="19" height="19" viewBox="0 0 19 19"><circle cx="9.500" cy="9.500" r="8.500" fill="none" stroke="#b9bcc4" stroke-width="1.700"/><circle cx="5.500" cy="9.500" r="1" fill="#b9bcc4"/><circle cx="9.500" cy="9.500" r="1" fill="#b9bcc4"/><circle cx="13.500" cy="9.500" r="1" fill="#b9bcc4"/></svg>
<div class="t bt" style="left:1296px;top:337px;color:#a9afc0">更多</div>

<!-- view toggles -->
<div class="a" style="left:1871px;top:326px;width:40px;height:41px;background:#f4f4f7;border-radius:9px"></div>
<svg style="left:1881px;top:338px" width="20" height="18" viewBox="0 0 20 18"><path d="M1 2 H11 M1 8.500 H9 M1 15 H9 M15 1 V16 M11.500 12.500 L15 16.500 L18.500 12.500" fill="none" stroke="#3c3f48" stroke-width="1.800"/></svg>
<div class="a" style="left:1924px;top:326px;width:77px;height:41px;background:#eeeff4;border-radius:9px;border:1px solid #e0e2e8"></div>
<div class="a" style="left:1927px;top:329px;width:36px;height:35px;background:#fff;border-radius:8px;box-shadow:0 1px 3px rgba(0,0,0,.18)"></div>
<svg style="left:1935px;top:337px" width="20" height="18" viewBox="0 0 20 18"><path d="M6 2 H20 M6 9 H20 M6 16 H20" stroke="#2c2c2e" stroke-width="2"/><path d="M0 2 H3 M0 9 H3 M0 16 H3" stroke="#2c2c2e" stroke-width="2.600"/></svg>
<svg style="left:1971px;top:337px" width="18" height="18" viewBox="0 0 18 18"><rect x="1" y="1" width="6" height="6" fill="none" stroke="#2c2c2e" stroke-width="1.900"/><rect x="11" y="1" width="6" height="6" fill="none" stroke="#2c2c2e" stroke-width="1.900"/><rect x="1" y="11" width="6" height="6" fill="none" stroke="#2c2c2e" stroke-width="1.900"/><rect x="11" y="11" width="6" height="6" fill="none" stroke="#2c2c2e" stroke-width="1.900"/></svg>

<!-- table header -->
<div class="a" style="left:683px;top:392px;width:1253px;height:1px;background:#e3e4e8"></div>
<div class="a" style="left:695px;top:409px;width:23px;height:23px;border:1.500px solid #cfd1d6;border-radius:5px;background:#fff"></div>
<div class="t" style="left:733px;top:410px;font-size:21px;color:#9a9ca2">文件名</div>
<svg style="left:1732px;top:411px" width="12" height="20" viewBox="0 0 12 20"><path d="M6 0.500 L11.500 7.500 H0.500 Z" fill="#6e7078"/><path d="M6 19.500 L11.500 12.500 H0.500 Z" fill="#b4b6bc"/></svg>
<div class="a" style="left:1752px;top:408px;width:1px;height:26px;background:#e3e4e8"></div>
<div class="t" style="left:1765px;top:410px;font-size:21px;color:#9a9ca2">修改时间</div>
<svg style="left:1970px;top:412px" width="26" height="21" viewBox="0 0 26 21"><path d="M1 2 H24 M1 10 H12 M1 18 H10" stroke="#8a8c94" stroke-width="2"/><circle cx="19" cy="15" r="3.200" fill="none" stroke="#8a8c94" stroke-width="1.800"/><path d="M19 9.500 V11.500 M19 18.500 V20.500 M13.500 15 H15.500 M22.500 15 H24.500 M15 11 L16.500 12.500 M21.500 17.500 L23 19 M23 11 L21.500 12.500 M16.500 17.500 L15 19" stroke="#8a8c94" stroke-width="1.600"/></svg>
<div class="a" style="left:683px;top:447px;width:1253px;height:1px;background:#e3e4e8"></div>
<!-- h scrollbar -->
<div class="a" style="left:683px;top:448px;width:1250px;height:23px;background:#f1f1f1"></div>
<div class="a" style="left:707px;top:449px;width:750px;height:20px;background:#c1c1c1"></div>
<svg style="left:690px;top:454px" width="7" height="10" viewBox="0 0 7 10"><path d="M6.500 0.500 V9.500 L0.500 5 Z" fill="#7a7a7a"/></svg>
<!-- rows -->
<svg style="left:702px;top:492px" width="9" height="14" viewBox="0 0 9 14"><path d="M1.500 1 L7.500 7 L1.500 13" fill="none" stroke="#3c3f48" stroke-width="2"/></svg>
<svg style="left:730px;top:482px" width="37" height="34" viewBox="0 0 37 34"><path d="M0 3 C0 1 1 0 3 0 H11 C13 0 14 1 15 2.500 L16.500 5 H34 C36 5 37 6 37 8 V12 H0 Z" fill="#5f8fe6"/><rect x="0" y="7.500" width="37" height="26.500" rx="2.500" fill="#7ba7f4"/><rect x="0" y="7.500" width="37" height="10" rx="2.500" fill="#86b0f7"/></svg>
<div class="t fn" style="top:491px">（1）学院职业培训工作实施方案</div>
<div class="t dt" style="top:491px">今天 10:05</div>
<div class="a rowl" style="top:527px"></div>
<svg style="left:702px;top:548px" width="9" height="14" viewBox="0 0 9 14"><path d="M1.500 1 L7.500 7 L1.500 13" fill="none" stroke="#3c3f48" stroke-width="2"/></svg>
<svg style="left:730px;top:538px" width="37" height="34" viewBox="0 0 37 34"><path d="M0 3 C0 1 1 0 3 0 H11 C13 0 14 1 15 2.500 L16.500 5 H34 C36 5 37 6 37 8 V12 H0 Z" fill="#5f8fe6"/><rect x="0" y="7.500" width="37" height="26.500" rx="2.500" fill="#7ba7f4"/><rect x="0" y="7.500" width="37" height="10" rx="2.500" fill="#86b0f7"/></svg>
<div class="t fn" style="top:547px">（2）近五年分年度开展非学历职业培训计划一览表</div>
<div class="t dt" style="top:547px">今天 10:05</div>
<div class="a rowl" style="top:583px"></div>
<div class="a" style="left:683px;width:1252px;height:56px;top:584px;background:#f4f4f7;border-radius:3px"></div>
<svg style="left:702px;top:604px" width="9" height="14" viewBox="0 0 9 14"><path d="M1.500 1 L7.500 7 L1.500 13" fill="none" stroke="#3c3f48" stroke-width="2"/></svg>
<svg style="left:730px;top:594px" width="37" height="34" viewBox="0 0 37 34"><path d="M0 3 C0 1 1 0 3 0 H11 C13 0 14 1 15 2.500 L16.500 5 H34 C36 5 37 6 37 8 V12 H0 Z" fill="#5f8fe6"/><rect x="0" y="7.500" width="37" height="26.500" rx="2.500" fill="#7ba7f4"/><rect x="0" y="7.500" width="37" height="10" rx="2.500" fill="#86b0f7"/></svg>
<div class="t fn" style="top:603px">（3）培训课程资源一览表</div>
<div class="t dt" style="top:603px">今天 10:04</div>
<div class="a rowl" style="top:639px"></div>
<svg style="left:702px;top:660px" width="9" height="14" viewBox="0 0 9 14"><path d="M1.500 1 L7.500 7 L1.500 13" fill="none" stroke="#3c3f48" stroke-width="2"/></svg>
<svg style="left:730px;top:650px" width="37" height="34" viewBox="0 0 37 34"><path d="M0 3 C0 1 1 0 3 0 H11 C13 0 14 1 15 2.500 L16.500 5 H34 C36 5 37 6 37 8 V12 H0 Z" fill="#5f8fe6"/><rect x="0" y="7.500" width="37" height="26.500" rx="2.500" fill="#7ba7f4"/><rect x="0" y="7.500" width="37" height="10" rx="2.500" fill="#86b0f7"/></svg>
<div class="t fn" style="top:659px">（4）培训师资队伍一览表</div>
<div class="t dt" style="top:659px">今天 10:04</div>
<div class="a rowl" style="top:695px"></div>
<svg style="left:702px;top:716px" width="9" height="14" viewBox="0 0 9 14"><path d="M1.500 1 L7.500 7 L1.500 13" fill="none" stroke="#3c3f48" stroke-width="2"/></svg>
<svg style="left:730px;top:706px" width="37" height="34" viewBox="0 0 37 34"><path d="M0 3 C0 1 1 0 3 0 H11 C13 0 14 1 15 2.500 L16.500 5 H34 C36 5 37 6 37 8 V12 H0 Z" fill="#5f8fe6"/><rect x="0" y="7.500" width="37" height="26.500" rx="2.500" fill="#7ba7f4"/><rect x="0" y="7.500" width="37" height="10" rx="2.500" fill="#86b0f7"/></svg>
<div class="t fn" style="top:715px">（5）行业企业共建培训基地一览表</div>
<div class="t dt" style="top:715px">今天 10:04</div>
<div class="a rowl" style="top:751px"></div>
<svg style="left:702px;top:772px" width="9" height="14" viewBox="0 0 9 14"><path d="M1.500 1 L7.500 7 L1.500 13" fill="none" stroke="#3c3f48" stroke-width="2"/></svg>
<svg style="left:730px;top:762px" width="37" height="34" viewBox="0 0 37 34"><path d="M0 3 C0 1 1 0 3 0 H11 C13 0 14 1 15 2.500 L16.500 5 H34 C36 5 37 6 37 8 V12 H0 Z" fill="#5f8fe6"/><rect x="0" y="7.500" width="37" height="26.500" rx="2.500" fill="#7ba7f4"/><rect x="0" y="7.500" width="37" height="10" rx="2.500" fill="#86b0f7"/></svg>
<div class="t fn" style="top:771px">（6）近五年分年度开展非学历职业培训人次统计表及相关材料</div>
<div class="t dt" style="top:771px">今天 10:04</div>
<div class="a rowl" style="top:807px"></div>
<svg style="left:702px;top:828px" width="9" height="14" viewBox="0 0 9 14"><path d="M1.500 1 L7.500 7 L1.500 13" fill="none" stroke="#3c3f48" stroke-width="2"/></svg>
<svg style="left:730px;top:818px" width="37" height="34" viewBox="0 0 37 34"><path d="M0 3 C0 1 1 0 3 0 H11 C13 0 14 1 15 2.500 L16.500 5 H34 C36 5 37 6 37 8 V12 H0 Z" fill="#5f8fe6"/><rect x="0" y="7.500" width="37" height="26.500" rx="2.500" fill="#7ba7f4"/><rect x="0" y="7.500" width="37" height="10" rx="2.500" fill="#86b0f7"/></svg>
<div class="t fn" style="top:827px">（7）近五年本科各专业开展非学历职业培训人次统计表及相关材料</div>
<div class="t dt" style="top:827px">今天 10:35</div>
<div class="a rowl" style="top:863px"></div>
<svg style="left:702px;top:884px" width="9" height="14" viewBox="0 0 9 14"><path d="M1.500 1 L7.500 7 L1.500 13" fill="none" stroke="#3c3f48" stroke-width="2"/></svg>
<svg style="left:730px;top:874px" width="37" height="34" viewBox="0 0 37 34"><path d="M0 3 C0 1 1 0 3 0 H11 C13 0 14 1 15 2.500 L16.500 5 H34 C36 5 37 6 37 8 V12 H0 Z" fill="#5f8fe6"/><rect x="0" y="7.500" width="37" height="26.500" rx="2.500" fill="#7ba7f4"/><rect x="0" y="7.500" width="37" height="10" rx="2.500" fill="#86b0f7"/></svg>
<div class="t fn" style="top:883px">（8）近五年年均非学历职业培训到账经费一览表</div>
<div class="t dt" style="top:883px">今天 09:33</div>
<div class="a rowl" style="top:919px"></div>
<svg style="left:702px;top:940px" width="9" height="14" viewBox="0 0 9 14"><path d="M1.500 1 L7.500 7 L1.500 13" fill="none" stroke="#3c3f48" stroke-width="2"/></svg>
<svg style="left:730px;top:930px" width="37" height="34" viewBox="0 0 37 34"><path d="M0 3 C0 1 1 0 3 0 H11 C13 0 14 1 15 2.500 L16.500 5 H34 C36 5 37 6 37 8 V12 H0 Z" fill="#5f8fe6"/><rect x="0" y="7.500" width="37" height="26.500" rx="2.500" fill="#7ba7f4"/><rect x="0" y="7.500" width="37" height="10" rx="2.500" fill="#86b0f7"/></svg>
<div class="t fn" style="top:939px">（9）近三年度非学历继续教育开展情况</div>
<div class="t dt" style="top:939px">今天 09:33</div>
<div class="a rowl" style="top:975px"></div>
<svg style="left:702px;top:996px" width="9" height="14" viewBox="0 0 9 14"><path d="M1.500 1 L7.500 7 L1.500 13" fill="none" stroke="#3c3f48" stroke-width="2"/></svg>
<svg style="left:730px;top:986px" width="37" height="34" viewBox="0 0 37 34"><path d="M0 3 C0 1 1 0 3 0 H11 C13 0 14 1 15 2.500 L16.500 5 H34 C36 5 37 6 37 8 V12 H0 Z" fill="#5f8fe6"/><rect x="0" y="7.500" width="37" height="26.500" rx="2.500" fill="#7ba7f4"/><rect x="0" y="7.500" width="37" height="10" rx="2.500" fill="#86b0f7"/></svg>
<div class="t fn" style="top:995px">（10）近五年年横向技术服务项目及到账经费一览表</div>
<div class="t dt" style="top:995px">今天 10:05</div>
<div class="a rowl" style="top:1031px"></div>
<!-- cover anything overflowing window bottom -->
<div class="a" id="task"></div>
<div class="a" style="left:2160px;top:0;width:240px;height:1080px;background:#000"></div>
<!-- pagination dots on taskbar top edge -->
<div class="a" style="left:1133px;top:1033px;width:17px;height:7px;border-radius:0 0 9px 9px;background:#fff"></div>
<div class="a" style="left:1173px;top:1033px;width:15px;height:6px;border-radius:0 0 8px 8px;background:#6e7378"></div>
<div class="a" style="left:1212px;top:1033px;width:15px;height:6px;border-radius:0 0 8px 8px;background:#6e7378"></div>
<div class="a" style="left:1251px;top:1033px;width:15px;height:6px;border-radius:0 0 8px 8px;background:#6e7378"></div>
<!-- ======= TASKBAR ICONS ======= -->
<svg style="left:255px;top:1045px" width="24" height="24" viewBox="0 0 24 24"><path d="M0 3.500 L10.500 2 V11.300 H0 Z M12 1.800 L24 0 V11.300 H12 Z M0 12.700 H10.500 V22 L0 20.500 Z M12 12.700 H24 V24 L12 22.200 Z" fill="#fff"/></svg>
<div class="a" style="left:301px;top:1041px;width:32px;height:32px;border-radius:5px;background:linear-gradient(180deg,#f6a03a,#ee7a1c)"></div>
<svg style="left:305px;top:1045px" width="24" height="24" viewBox="0 0 25 24"><path d="M12.500 0.500 L16 8.500 L24.500 9.300 L18 15 L20 23.500 L12.500 19 L5 23.500 L7 15 L0.500 9.300 L9 8.500 Z" fill="#fff8e8"/></svg>
<div class="a" style="left:406px;top:1033px;width:55px;height:47px;background:#2c333b"></div>
<div class="a" style="left:406px;top:1077px;width:55px;height:3px;background:#86abd8"></div>
<div class="a" style="left:697px;top:1077px;width:43px;height:3px;background:#86abd8"></div>
<div class="a" style="left:754px;top:1077px;width:42px;height:3px;background:#86abd8"></div>
<div class="a" style="left:811px;top:1077px;width:43px;height:3px;background:#86abd8"></div>
<div class="a" style="left:868px;top:1077px;width:43px;height:3px;background:#86abd8"></div>
<svg style="transform:scale(.900);transform-origin:50% 50%;left:361px;top:1043px" width="28" height="28" viewBox="0 0 28 28"><path d="M5 22 C1 14 6 6 14 6 C21 6 25 11 24 17 L10 17 C11 21 16 22 20 19 L23 22 C17 27 9 27 5 22 Z M10 13 L19 13 C18 9.500 11 9.500 10 13 Z" fill="#4aaaf0"/><path d="M2 25 C0 18 8 8 22 3 C26 2 27 4 25 8" fill="none" stroke="#f5c42c" stroke-width="2"/></svg>
<svg style="transform:scale(.900);transform-origin:50% 50%;left:418px;top:1043px" width="28" height="28" viewBox="0 0 28 28"><circle cx="14" cy="14" r="13" fill="#7ed321"/><circle cx="14" cy="14" r="10.500" fill="#eaf8d8"/><path d="M7 18 C5 12 9 8 14 8 C19 8 22 11 21 15 L11 15 C12 18 16 19 19 17 L21 19 C16 23 10 22 7 18 Z M11 12.500 L17.500 12.500 C17 10.500 12 10.500 11 12.500 Z" fill="#3aa828"/></svg>
<svg style="transform:scale(.900);transform-origin:50% 50%;left:475px;top:1043px" width="28" height="28" viewBox="0 0 28 28"><path d="M5 22 C1 14 6 6 14 6 C21 6 25 11 24 17 L10 17 C11 21 16 22 20 19 L23 22 C17 27 9 27 5 22 Z M10 13 L19 13 C18 9.500 11 9.500 10 13 Z" fill="#4aaaf0"/><path d="M2 25 C0 18 8 8 22 3 C26 2 27 4 25 8" fill="none" stroke="#f5c42c" stroke-width="2"/></svg>
<svg style="transform:scale(.900);transform-origin:50% 50%;left:532px;top:1043px" width="28" height="28" viewBox="0 0 28 28"><path d="M5 22 C1 14 6 6 14 6 C21 6 25 11 24 17 L10 17 C11 21 16 22 20 19 L23 22 C17 27 9 27 5 22 Z M10 13 L19 13 C18 9.500 11 9.500 10 13 Z" fill="#4aaaf0"/><path d="M2 25 C0 18 8 8 22 3 C26 2 27 4 25 8" fill="none" stroke="#f5c42c" stroke-width="2"/></svg>
<svg style="transform:scale(.900);transform-origin:50% 50%;left:590px;top:1044px" width="26" height="26" viewBox="0 0 26 26"><rect width="26" height="26" rx="6" fill="#1687e8"/><path d="M6 6 L18 10 L20 14 L14 14 L12 21 L9 14 Z" fill="#fff"/></svg>
<svg style="transform:scale(.900);transform-origin:50% 50%;left:645px;top:1042px" width="30" height="30" viewBox="0 0 30 30"><circle cx="15" cy="16" r="12.500" fill="#f5821f"/><path d="M4 10 C2 18 6 27 15 28 C24 28 29 20 27 12 C25 8 22 5 21 3 C21 7 19 8 17 7 C13 5 9 7 8 10 C6 10 5 9 4 10 Z" fill="#e8452c"/><circle cx="16" cy="17" r="6.500" fill="#7a3ad8"/><path d="M10 14 C12 10 18 10 20 13 C17 12 14 13 13 16 C12 19 14 22 17 22 C12 24 8 19 10 14 Z" fill="#fbc02d"/></svg>
<svg style="transform:scale(.900);transform-origin:50% 50%;left:703px;top:1044px" width="28" height="26" viewBox="0 0 28 26"><path d="M1 2 H10 L12 5 H27 V24 H1 Z" fill="#f0c14a"/><rect x="1" y="8" width="26" height="16" fill="#fbe08a"/><rect x="8" y="15" width="12" height="9" fill="#3a8fd8"/><rect x="10" y="19" width="8" height="5" fill="#fbe08a"/></svg>
<svg style="transform:scale(.900);transform-origin:50% 50%;left:760px;top:1043px" width="28" height="28" viewBox="0 0 28 28"><rect x="7" y="2" width="20" height="24" fill="#f2f2f2" stroke="#9ac0a0"/><path d="M11 7 H24 M11 11 H24 M11 15 H24 M11 19 H24" stroke="#8ab89a" stroke-width="1.400"/><rect x="1" y="5" width="16" height="17" fill="#1e7a44"/><path d="M5 9 L13 18 M13 9 L5 18" stroke="#fff" stroke-width="2.400"/></svg>
<svg style="transform:scale(.900);transform-origin:50% 50%;left:816px;top:1044px" width="30" height="26" viewBox="0 0 30 26"><rect x="1" y="1" width="24" height="19" fill="#10161c" stroke="#2fb45a" stroke-width="2"/><rect x="1" y="1" width="24" height="5" fill="#2fb45a"/><ellipse cx="22" cy="19" rx="7" ry="5.500" fill="#d8dadc"/><circle cx="20" cy="18" r="1" fill="#555"/><circle cx="24.500" cy="18" r="1" fill="#555"/></svg>
<svg style="transform:scale(.900);transform-origin:50% 50%;left:875px;top:1044px" width="27" height="26" viewBox="0 0 27 26"><rect width="27" height="26" rx="5" fill="#1b7cf0"/><path d="M3 18 L9 10 L13 15 L17 9 L24 18 L20 18 L17 14 L13 19 L9 15 L7 18 Z" fill="#fff"/></svg>
<div class="a" style="left:1434px;top:1044px;width:23px;height:23px;background:#fff"></div>
<div class="t" style="left:1435px;top:1045px;font-size:21px;color:#111">拼</div>
<svg style="left:1486px;top:1045px" width="24" height="24" viewBox="0 0 27 26"><rect width="27" height="26" rx="5" fill="#1b7cf0"/><path d="M3 18 L9 10 L13 15 L17 9 L24 18 L20 18 L17 14 L13 19 L9 15 L7 18 Z" fill="#fff"/></svg>
<svg style="left:1522px;top:1045px" width="24" height="24" viewBox="0 0 24 24"><rect width="24" height="24" rx="6" fill="#f6c628"/><circle cx="12" cy="13" r="7.500" fill="#f08a1c"/><path d="M9 9 L9 17 M15.500 9 L11.500 13 L15.500 17" fill="none" stroke="#fff7d8" stroke-width="2"/></svg>
<svg style="left:1559px;top:1044px" width="26" height="27" viewBox="0 0 26 27"><path d="M11 1 C14 3 18 4 21 4 V13 C21 19 16 23 11 25 C6 23 1 19 1 13 V4 C4 4 8 3 11 1 Z" fill="#fff"/><path d="M11 1 V25 M1 12 H21" stroke="#0a0f17" stroke-width="1.600"/><path d="M19 15 L25.500 26 H12.500 Z" fill="#f5b400"/><path d="M19 19 V22.500 M19 24 V25" stroke="#222" stroke-width="1.500"/></svg>
<svg style="left:1594px;top:1045px" width="25" height="25" viewBox="0 0 28 28"><circle cx="14" cy="14" r="13" fill="#7ed321"/><circle cx="14" cy="14" r="10.500" fill="#eaf8d8"/><path d="M7 18 C5 12 9 8 14 8 C19 8 22 11 21 15 L11 15 C12 18 16 19 19 17 L21 19 C16 23 10 22 7 18 Z M11 12.500 L17.500 12.500 C17 10.500 12 10.500 11 12.500 Z" fill="#3aa828"/></svg>
<svg style="left:1630px;top:1044px" width="24" height="26" viewBox="0 0 24 26"><rect width="24" height="26" fill="#6e7174"/><path d="M7.500 11 V8 A4.500 4.500 0 0 1 16.500 8 V11" fill="none" stroke="#d8dadc" stroke-width="1.800"/><rect x="5" y="11" width="14" height="11" fill="#b8babc"/><rect x="8" y="14" width="8" height="5" fill="#6e7174"/></svg>
<svg style="left:1666px;top:1044px" width="24" height="26" viewBox="0 0 24 26"><rect width="24" height="26" fill="#2a8ae8"/><rect x="2" y="3" width="5" height="5" fill="#fff"/><rect x="9" y="3" width="13" height="5" fill="#cfe6fb"/><rect x="2" y="11" width="5" height="5" fill="#fff"/><rect x="9" y="11" width="13" height="5" fill="#fff"/><rect x="2" y="19" width="5" height="4" fill="#cfe6fb"/><rect x="9" y="19" width="13" height="4" fill="#cfe6fb"/></svg>
<svg style="left:1701px;top:1045px" width="26" height="24" viewBox="0 0 26 24"><rect x="6" y="1" width="14" height="7" fill="#f4f6f8"/><rect x="1" y="7" width="24" height="11" rx="2" fill="#aab8c8"/><rect x="6" y="14" width="14" height="9" fill="#fff"/><path d="M8 17 H18 M8 20 H18" stroke="#8a98a8" stroke-width="1.200"/></svg>
<svg style="left:1735px;top:1045px" width="30" height="25" viewBox="0 0 30 25"><ellipse cx="11" cy="9.500" rx="10.500" ry="9" fill="#2dc46a"/><path d="M5 16 L4 21 L10 18 Z" fill="#2dc46a"/><ellipse cx="20.500" cy="16" rx="8.500" ry="7.500" fill="#e6ece8"/><path d="M25 22 L27 25 L22 23 Z" fill="#e6ece8"/><circle cx="7.500" cy="7.500" r="1.300" fill="#0e5a2c"/><circle cx="14.500" cy="7.500" r="1.300" fill="#0e5a2c"/></svg>
<svg style="left:1774px;top:1045px" width="24" height="24" viewBox="0 0 26 26"><rect width="26" height="26" rx="6" fill="#1687e8"/><path d="M6 6 L18 10 L20 14 L14 14 L12 21 L9 14 Z" fill="#fff"/></svg>
<svg style="left:1810px;top:1043px" width="26" height="28" viewBox="0 0 26 28"><path d="M12 3 C15 5 19 6 23 6 V15 C23 21 17 25 12 27 C7 25 1 21 1 15 V6 C5 6 9 5 12 3 Z" fill="#f39a1e"/><path d="M12 3 C15 5 19 6 23 6 V15 C23 21 17 25 12 27 Z" fill="#e8661c"/><path d="M12 9 C16 12 15 17 12 21 C9 17 8 12 12 9 Z" fill="#fff"/><path d="M17 1 L21 0 L20 5 Z" fill="#e8402c"/></svg>
<svg style="left:1846px;top:1047px" width="26" height="20" viewBox="0 0 26 20"><rect width="26" height="20" fill="#1a2a1a"/><path d="M3 10 C7 4 15 4 20 8 C16 8 12 10 10 13 C8 12 7 11 8 9 C10 7 13 7 15 8 C12 9 11 10 11 11 C14 13 18 12 21 9 L23 11 C19 16 9 17 3 10 Z" fill="#76b900"/></svg>
<svg style="left:1882px;top:1049px" width="27" height="15" viewBox="0 0 27 15"><rect x="1" y="1" width="22" height="13" rx="1" fill="none" stroke="#fff" stroke-width="1.600"/><rect x="3.500" y="3.500" width="17" height="8" fill="#fff"/><rect x="24" y="5" width="2.500" height="5" fill="#fff"/></svg>
<svg style="left:1918px;top:1046px" width="26" height="22" viewBox="0 0 26 22"><path d="M1 7.500 H5.500 L11 2 V20 L5.500 14.500 H1 Z" fill="none" stroke="#fff" stroke-width="1.500" stroke-linejoin="round"/><path d="M14.500 7.500 C16 9.500 16 12.500 14.500 14.500 M18 5 C20.500 8.500 20.500 13.500 18 17 M21.500 2.500 C25 7.500 25 14.500 21.500 19.500" fill="none" stroke="#fff" stroke-width="1.400"/></svg>
<svg style="left:1955px;top:1044px" width="26" height="26" viewBox="0 0 26 26"><path d="M3 22 C3 12 12 4 23 4 M8 23 C8 15 15 9 23 9 M13 24 C13 18 17 14 23 14" fill="none" stroke="#fff" stroke-width="1.600"/><circle cx="21" cy="22" r="2" fill="#fff"/></svg>
<div class="t" style="left:1996px;top:1047px;font-size:20px;color:#fff;letter-spacing:-0.6px">14:04:31</div>
<svg style="left:2098px;top:1045px" width="26" height="25" viewBox="0 0 26 25"><path d="M1 1 H25 V18 H17 L13 23 L9 18 H1 Z" fill="none" stroke="#fff" stroke-width="1.700" stroke-linejoin="round"/></svg>
<div class="a" style="left:2152px;top:1035px;width:2px;height:45px;background:#4a545e"></div>
<!-- ======= OVERLAYS ======= -->
<!-- mouse cursor -->
<svg style="left:1051px;top:626px" width="20" height="29" viewBox="0 0 20 29"><path d="M0.700 0.700 V24 L6 19 L9.800 27.500 L13.400 26 L9.700 18 H17.800 Z" fill="#fff" stroke="#111" stroke-width="1.300" stroke-linejoin="miter"/></svg>
<!-- green dot -->
<div class="a" style="left:2308px;top:33px;width:18px;height:18px;border-radius:50%;background:#2fd158"></div>
<!-- video tile -->
<div class="a" style="left:2147px;top:113px;width:220px;height:219px;border-radius:15px;overflow:hidden;background:#d3cacd">
<svg style="left:0;top:0" width="220" height="219" viewBox="0 0 220 219">
<defs><filter id="vb" x="-10%" y="-10%" width="120%" height="120%"><feGaussianBlur stdDeviation="2.600"/></filter><filter id="vb2" x="-10%" y="-10%" width="120%" height="120%"><feGaussianBlur stdDeviation="1.900"/></filter>
<linearGradient id="vbg" x1="0" y1="0" x2="0" y2="1"><stop offset="0" stop-color="#d6cdd0"/><stop offset="0.450" stop-color="#cfc5c7"/><stop offset="0.600" stop-color="#b4abab"/><stop offset="1" stop-color="#9a9494"/></linearGradient>
<radialGradient id="vskin" cx="0.500" cy="0.600" r="0.650"><stop offset="0" stop-color="#ecd2c9"/><stop offset="0.600" stop-color="#e3c4ba"/><stop offset="1" stop-color="#cfa99c"/></radialGradient></defs>
<rect width="220" height="219" fill="url(#vbg)"/>
<g filter="url(#vb)">
<path d="M0 108 L40 98 L40 112 L0 122 Z" fill="#b59a8a"/>
<path d="M0 122 L40 112 V150 H0 Z" fill="#a8a4a6"/>
<path d="M186 58 L220 50 V62 L186 70 Z" fill="#b4957e"/>
<path d="M186 70 L220 62 V150 H186 Z" fill="#a3a3ab"/>
<path d="M196 150 L212 76 M204 150 L220 90 M188 110 L196 108 M186 128 L194 126" stroke="#e6e6ea" stroke-width="3" fill="none"/>
<path d="M58 26 C68 6 88 0 104 1 C124 0 150 4 168 20 C184 36 192 60 191 88 C191 104 188 116 184 126 L176 150 H24 C24 128 28 100 38 64 C44 44 50 34 58 26 Z" fill="#433e3f"/>
<path d="M24 150 C22 170 30 190 40 219 H8 C4 190 10 165 24 150 Z" fill="#2a2627"/>
<path d="M70 30 C84 12 110 8 128 14 C106 22 84 40 62 74 C58 56 62 42 70 30 Z" fill="#575152" opacity=".700"/>
<path d="M140 42 C152 44 162 50 168 58 C176 70 180 84 182 100 C184 112 184 130 181 150 H42 C43 138 45 128 48 122 C52 112 58 104 64 97 C72 88 84 78 96 70 C110 61 128 45 142 29 Z" fill="url(#vskin)"/>
<path d="M38 150 C38 136 40 126 46 118 C52 112 56 118 54 128 C53 138 52 144 52 150 Z" fill="#d8b3a6"/>
<path d="M142 27 L148 40 C130 54 108 64 94 72 C80 80 70 90 62 99 C54 108 50 118 46 128 L40 100 C44 78 54 58 70 44 C90 28 120 22 142 27 Z" fill="#464041"/>
</g>
<g filter="url(#vb2)">
<path d="M96 92 C104 85 116 85 126 92 C116 96 104 97 96 92 Z" fill="#4c3c38"/>
<path d="M92 88 C102 81 118 81 128 90" fill="none" stroke="#b8958a" stroke-width="2"/>
<path d="M158 104 C163 100 172 101 176 107 C170 109 163 109 158 104 Z" fill="#4c3c38"/>
<path d="M98 66 C108 60 122 62 132 68" fill="none" stroke="#9a7c72" stroke-width="2.500"/>
<path d="M156 76 C164 74 172 78 178 84" fill="none" stroke="#a08378" stroke-width="2.200"/>
<ellipse cx="142" cy="140" rx="14" ry="5" fill="#cfa597"/>
<path d="M148 106 C150 116 152 124 156 132" fill="none" stroke="#dcb9ad" stroke-width="4"/>
<ellipse cx="50" cy="140" rx="6" ry="3" fill="#b08a7c"/>
</g>
<rect x="0" y="148" width="220" height="71" fill="rgba(36,33,35,.900)"/>
</svg>
</div>
<svg style="left:2160px;top:280px" width="25" height="34" viewBox="0 0 25 34"><rect x="6.500" y="0" width="12" height="21" rx="6" fill="#fff"/><path d="M6.500 13 H18.500 V15 A6 6 0 0 1 6.500 15 Z" fill="#3fc060"/><path d="M2 13 V15 A10.500 10.500 0 0 0 23 15 V13" fill="none" stroke="#fff" stroke-width="2.600"/><path d="M12.500 25 V33" stroke="#fff" stroke-width="3"/></svg>
<div class="t" style="left:2193px;top:281px;font-size:32px;color:#fff;font-family:'Liberation Serif','Noto Serif CJK SC',serif">蔡娟</div>
<div class="t" style="left:2262px;top:279px;font-size:36px;color:#2a7fe8;font-style:italic;font-family:'Liberation Serif',serif">@<span style="font-style:normal;font-size:30px;letter-spacing:3px;position:relative;top:-3px">···</span></div>
<!-- mute button -->
<div class="a" style="left:2170px;top:850px;width:131px;height:131px;border-radius:50%;background:radial-gradient(circle at 50% 45%,#2d3032,#272a2c)"></div>
<svg style="left:2200px;top:880px" width="70" height="75" viewBox="0 0 70 75"><rect x="25" y="8" width="20" height="40" rx="10" fill="#bfc3c6"/><path d="M15.500 34 V38 A19.500 19.500 0 0 0 54.500 38 V34" fill="none" stroke="#bfc3c6" stroke-width="4" stroke-linecap="round"/><path d="M35 58 V67" stroke="#bfc3c6" stroke-width="4.500" stroke-linecap="round"/><path d="M7 61 L62 4.500" stroke="#26292b" stroke-width="7"/><path d="M6.500 64 L63.500 6" stroke="#c7646a" stroke-width="3.600" stroke-linecap="round"/></svg>
</body>
</html>
